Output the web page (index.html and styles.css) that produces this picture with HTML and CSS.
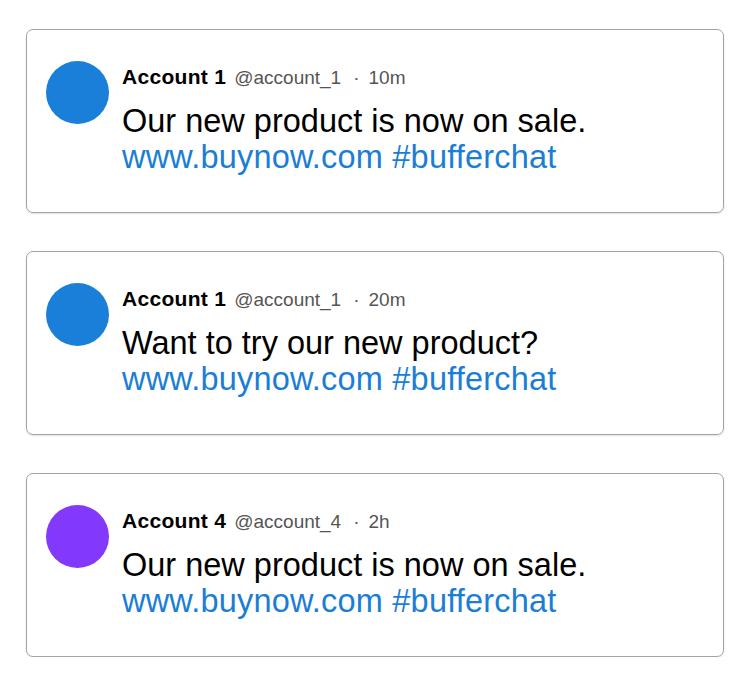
FILE: index.html
```html
<!DOCTYPE html>
<html>
<head>
<meta charset="utf-8">
<link rel="stylesheet" href="styles.css">
</head>
<body>
<div class="feed">
  <div class="card">
    <div class="avatar avatar-blue"></div>
    <div class="content">
      <div class="header"><span class="name">Account 1</span><span class="handle">@account_1</span><span class="dot">·</span><span class="time">10m</span></div>
      <div class="text">Our new product is now on sale.<br><span class="link">www.buynow.com #bufferchat</span></div>
    </div>
  </div>
  <div class="card">
    <div class="avatar avatar-blue"></div>
    <div class="content">
      <div class="header"><span class="name">Account 1</span><span class="handle">@account_1</span><span class="dot">·</span><span class="time">20m</span></div>
      <div class="text">Want to try our new product?<br><span class="link">www.buynow.com #bufferchat</span></div>
    </div>
  </div>
  <div class="card">
    <div class="avatar avatar-purple"></div>
    <div class="content">
      <div class="header"><span class="name">Account 4</span><span class="handle">@account_4</span><span class="dot">·</span><span class="time">2h</span></div>
      <div class="text">Our new product is now on sale.<br><span class="link">www.buynow.com #bufferchat</span></div>
    </div>
  </div>
</div>
</body>
</html>
```
FILE: styles.css
```css
html, body {
  margin: 0;
  padding: 0;
  background: #ffffff;
}
body {
  font-family: "Liberation Sans", Arial, sans-serif;
  color: #000;
}
.feed {
  padding: 29px 0 0 26px;
  display: flex;
  flex-direction: column;
  gap: 38px;
  width: 698px;
}
.card {
  display: flex;
  gap: 13px;
  border: 1px solid #a3a3a3;
  border-radius: 7px;
  padding: 31px 19px 40px 19px;
  box-shadow: 0 1px 2px rgba(0,0,0,0.12);
  height: 111px;
}
.avatar {
  width: 63px;
  height: 63px;
  border-radius: 50%;
  flex: none;
}
.avatar-blue { background: #1a7fd8; }
.avatar-purple { background: #8339fc; }
.content {
  padding-top: 4px;
}
.header {
  font-size: 19px;
  line-height: 24px;
  white-space: nowrap;
}
.name {
  font-weight: bold;
  font-size: 21px;
  letter-spacing: 0.3px;
  margin-right: 8px;
}
.handle, .time, .dot {
  color: #555;
}
.dot {
  margin: 0 9px 0 12px;
}
.text {
  margin-top: 13px;
  font-size: 32.5px;
  line-height: 36px;
}
.link {
  color: #1b7ed4;
  letter-spacing: 0.2px;
}
```
